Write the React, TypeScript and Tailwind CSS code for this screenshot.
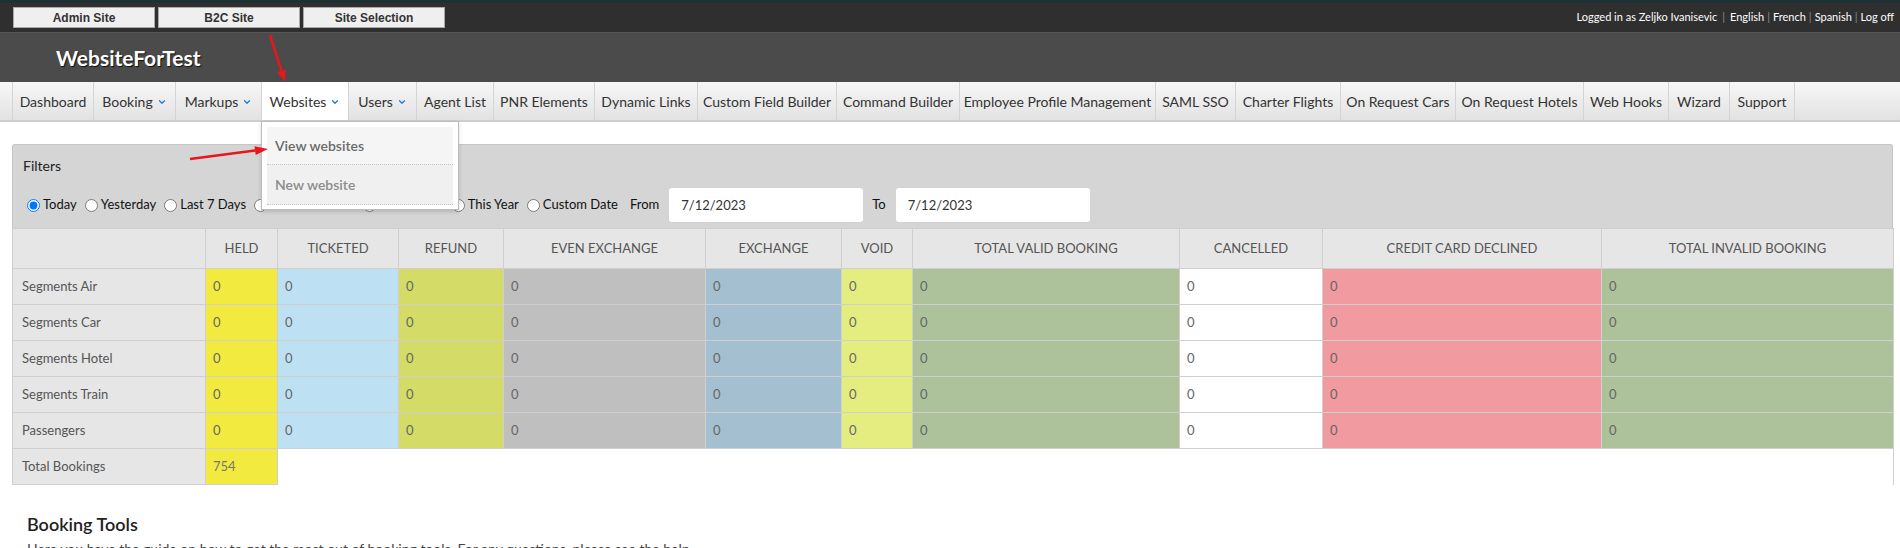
import { ChevronDown } from "lucide-react";

const navItems = [
  { label: "Dashboard", w: 81 },
  { label: "Booking", w: 82, drop: true },
  { label: "Markups", w: 86, drop: true },
  { label: "Websites", w: 87, drop: true, active: true },
  { label: "Users", w: 68, drop: true },
  { label: "Agent List", w: 77 },
  { label: "PNR Elements", w: 101 },
  { label: "Dynamic Links", w: 103 },
  { label: "Custom Field Builder", w: 139 },
  { label: "Command Builder", w: 123 },
  { label: "Employee Profile Management", w: 196 },
  { label: "SAML SSO", w: 80 },
  { label: "Charter Flights", w: 105 },
  { label: "On Request Cars", w: 115 },
  { label: "On Request Hotels", w: 128 },
  { label: "Web Hooks", w: 85 },
  { label: "Wizard", w: 61 },
  { label: "Support", w: 65 },
];

const columns = [
  { label: "HELD", w: 72, bg: "bg-[#f3ea3f]" },
  { label: "TICKETED", w: 121, bg: "bg-[#bde0f3]" },
  { label: "REFUND", w: 105, bg: "bg-[#d4db66]" },
  { label: "EVEN EXCHANGE", w: 202, bg: "bg-[#bfbfbf]" },
  { label: "EXCHANGE", w: 136, bg: "bg-[#a4c0d0]" },
  { label: "VOID", w: 71, bg: "bg-[#e5ec80]" },
  { label: "TOTAL VALID BOOKING", w: 267, bg: "bg-[#adc29b]" },
  { label: "CANCELLED", w: 143, bg: "bg-white" },
  { label: "CREDIT CARD DECLINED", w: 279, bg: "bg-[#f19ba1]" },
  { label: "TOTAL INVALID BOOKING", w: 292, bg: "bg-[#adc29b]" },
];

const rows = ["Segments Air", "Segments Car", "Segments Hotel", "Segments Train", "Passengers"];

const periods = ["Today", "Yesterday", "Last 7 Days", "Month to Date", "Last Month", "This Year", "Custom Date"];

function TopBar() {
  return (
    <div className="h-[32px] bg-[#2f2f2f] relative flex justify-between">
      <div className="absolute top-0 left-0 right-0 h-[3px] bg-[#1d3134]" />
      <div className="flex gap-[3px] pl-[13px] pt-[7px]">
        {["Admin Site", "B2C Site", "Site Selection"].map((b) => (
          <div
            key={b}
            className="w-[142px] h-[21px] bg-[#efefef] border border-[#a9a9a9] flex items-center justify-center text-[12px] font-bold text-[#333] font-['Liberation_Sans',Arial,sans-serif]"
          >
            {b}
          </div>
        ))}
      </div>
      <div className="flex items-center pr-[6px] pt-[3px] text-[11px] text-white">
        <span>Logged in as Zeljko Ivanisevic</span>
        <span className="mx-[5px] text-[#8a8a8a]">|</span>
        <span>English</span>
        <span className="mx-[3px] text-[#8a8a8a]">|</span>
        <span>French</span>
        <span className="mx-[3px] text-[#8a8a8a]">|</span>
        <span>Spanish</span>
        <span className="mx-[3px] text-[#8a8a8a]">|</span>
        <span>Log off</span>
      </div>
    </div>
  );
}

function NavBar() {
  return (
    <div className="h-[40px] bg-gradient-to-b from-[#f7f7f7] to-[#e2e2e2] border-b-2 border-[#cdcdcd] flex pl-[12px]">
      {navItems.map((n) => (
        <div
          key={n.label}
          style={{ width: n.w }}
          className={`h-[38px] flex items-center justify-center gap-[4px] border-l border-[#d4d4d4] text-[14px] text-[#333] ${
            n.active ? "bg-white" : ""
          }`}
        >
          <span>{n.label}</span>
          {n.drop && <ChevronDown size={10} strokeWidth={3} className="text-[#1b7ad6] mt-[2px]" />}
        </div>
      ))}
      <div className="h-[38px] border-l border-[#d4d4d4]" />
    </div>
  );
}

function Dropdown() {
  return (
    <div className="absolute left-[261px] top-[121px] w-[198px] bg-white border border-[#bdbdbd] shadow-[0_2px_4px_rgba(0,0,0,0.15)] p-[5px] pb-[4px]">
      <div className="h-[38px] bg-[#f5f5f5] border-b border-dotted border-[#c4c4c4] flex items-center pl-[8px] text-[14px] font-semibold text-[#6a6a6a]">
        View websites
      </div>
      <div className="h-[40px] bg-[#f0f0f0] border-b border-dotted border-[#c4c4c4] flex items-center pl-[8px] text-[14px] font-semibold text-[#8c8c8c]">
        New website
      </div>
    </div>
  );
}

function Arrows() {
  return (
    <svg className="absolute top-0 left-0 pointer-events-none" width="1900" height="548">
      <line x1="270" y1="35" x2="281.4" y2="70.6" stroke="#e8161d" strokeWidth="2.5" />
      <polygon points="285,82 285.7,69.2 277.1,72" fill="#e8161d" />
      <line x1="190" y1="159" x2="255.1" y2="150.6" stroke="#e8161d" strokeWidth="2.5" />
      <polygon points="268,149 255.7,155.1 254.5,146.2" fill="#e8161d" />
    </svg>
  );
}

function Filters() {
  return (
    <div className="h-[84px] bg-[#d5d5d5] border border-[#c6c6c6] border-b-0 rounded-t-[3px] pl-[14px] text-[13px] text-[#111]">
      <div className="pt-[10px] text-[14px] text-[#222] ml-[-4px]">Filters</div>
      <div className="flex items-center mt-[12px] h-[34px]">
        {periods.map((p, i) => (
          <label key={p} className={`flex items-center ${i > 0 ? "ml-[8px]" : ""}`}>
            <input type="radio" name="period" defaultChecked={i === 0} className="m-0 w-[13px] h-[13px] mr-[3px]" />
            <span>{p}</span>
          </label>
        ))}
        <span className="ml-[12px]">From</span>
        <input
          readOnly
          value="7/12/2023"
          className="ml-[10px] w-[194px] h-[34px] bg-white rounded-[3px] px-[12px] text-[13px] text-[#333] outline-none"
        />
        <span className="ml-[9px]">To</span>
        <input
          readOnly
          value="7/12/2023"
          className="ml-[10px] w-[194px] h-[34px] bg-white rounded-[3px] px-[12px] text-[13px] text-[#333] outline-none"
        />
      </div>
    </div>
  );
}

function StatsTable() {
  return (
    <table className="table-fixed border-collapse w-[1881px] text-[13px]">
      <colgroup>
        <col style={{ width: 193 }} />
        {columns.map((c) => (
          <col key={c.label} style={{ width: c.w }} />
        ))}
      </colgroup>
      <thead>
        <tr className="h-[40px] bg-[#e6e6e6]">
          <th className="border border-[#cfcfcf]" />
          {columns.map((c) => (
            <th key={c.label} className="border border-[#cfcfcf] font-normal text-[#555] text-center">
              {c.label}
            </th>
          ))}
        </tr>
      </thead>
      <tbody>
        {rows.map((r) => (
          <tr key={r} className="h-[36px]">
            <td className="border border-[#cfcfcf] bg-[#e6e6e6] pl-[9px] text-[#555]">{r}</td>
            {columns.map((c) => (
              <td key={c.label} className={`border border-[#cfcfcf] ${c.bg} pl-[7px] text-[#666]`}>
                0
              </td>
            ))}
          </tr>
        ))}
        <tr className="h-[36px]">
          <td className="border border-[#cfcfcf] bg-[#e6e6e6] pl-[9px] text-[#555]">Total Bookings</td>
          <td className="border border-[#cfcfcf] bg-[#f3ea3f] pl-[7px] text-[#777]">754</td>
          <td colSpan={9} className="border-r border-[#cfcfcf]" />
        </tr>
      </tbody>
    </table>
  );
}

export default function App() {
  return (
    <div className="relative w-[1900px] h-[548px] overflow-hidden bg-white font-['Lato','Noto_Sans',sans-serif]">
      <TopBar />
      <div className="h-[50px] bg-[#4b4b4b] border-t border-[#575757] flex items-center pl-[56px]">
        <span className="text-[21px] font-bold text-white [text-shadow:1px_1px_1px_#111]">WebsiteForTest</span>
      </div>
      <NavBar />
      <div className="pt-[22px] pl-[12px] pr-[7px]">
        <Filters />
        <StatsTable />
        <div className="pl-[15px] pt-[26px]">
          <h2 className="text-[18px] leading-[26px] font-semibold text-[#222]">Booking Tools</h2>
          <p className="text-[14px] leading-[20px] text-[#444] mt-[2px]">
            Here you have the guide on how to get the most out of booking tools. For any questions, please see the help.
          </p>
        </div>
      </div>
      <Dropdown />
      <Arrows />
    </div>
  );
}
